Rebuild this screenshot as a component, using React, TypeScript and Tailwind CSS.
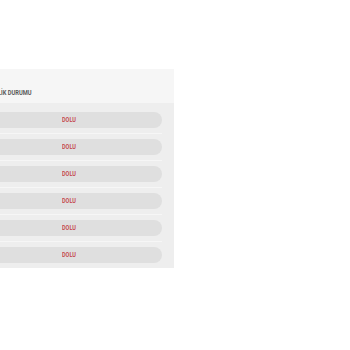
export default function App() {
  const rows = ["DOLU", "DOLU", "DOLU", "DOLU", "DOLU", "DOLU"];
  return (
    <div className="w-[350px] h-[350px] bg-white overflow-hidden pt-[69px]">
      <div
        className="w-[174px] bg-[#f6f6f6]"
        style={{ fontFamily: "Roboto, 'Liberation Sans', sans-serif" }}
      >
        <div className="h-[34px] flex items-end pb-[6px]">
          <div className="w-[32px] flex justify-end">
            <span className="text-[8px] leading-none font-bold text-[#5a5a5a] whitespace-nowrap shrink-0 scale-x-[0.72] origin-right">
              MÜSAİTLİK DURUMU
            </span>
          </div>
        </div>
        <div className="bg-[#eeeeee] pr-[12px] pt-[4px]">
          {rows.map((r, i) => (
            <div key={i} className="pt-[5px] pb-[5px] border-b border-[#f6f6f6] last:border-b-0">
              <div className="w-full h-[16px] rounded-r-full bg-[#dfdfdf] flex items-center pl-[62px] pt-[1px]">
                <span className="text-[6.5px] font-semibold text-[#c4454a] scale-x-[0.85] origin-left">{r}</span>
              </div>
            </div>
          ))}
        </div>
      </div>
    </div>
  );
}
